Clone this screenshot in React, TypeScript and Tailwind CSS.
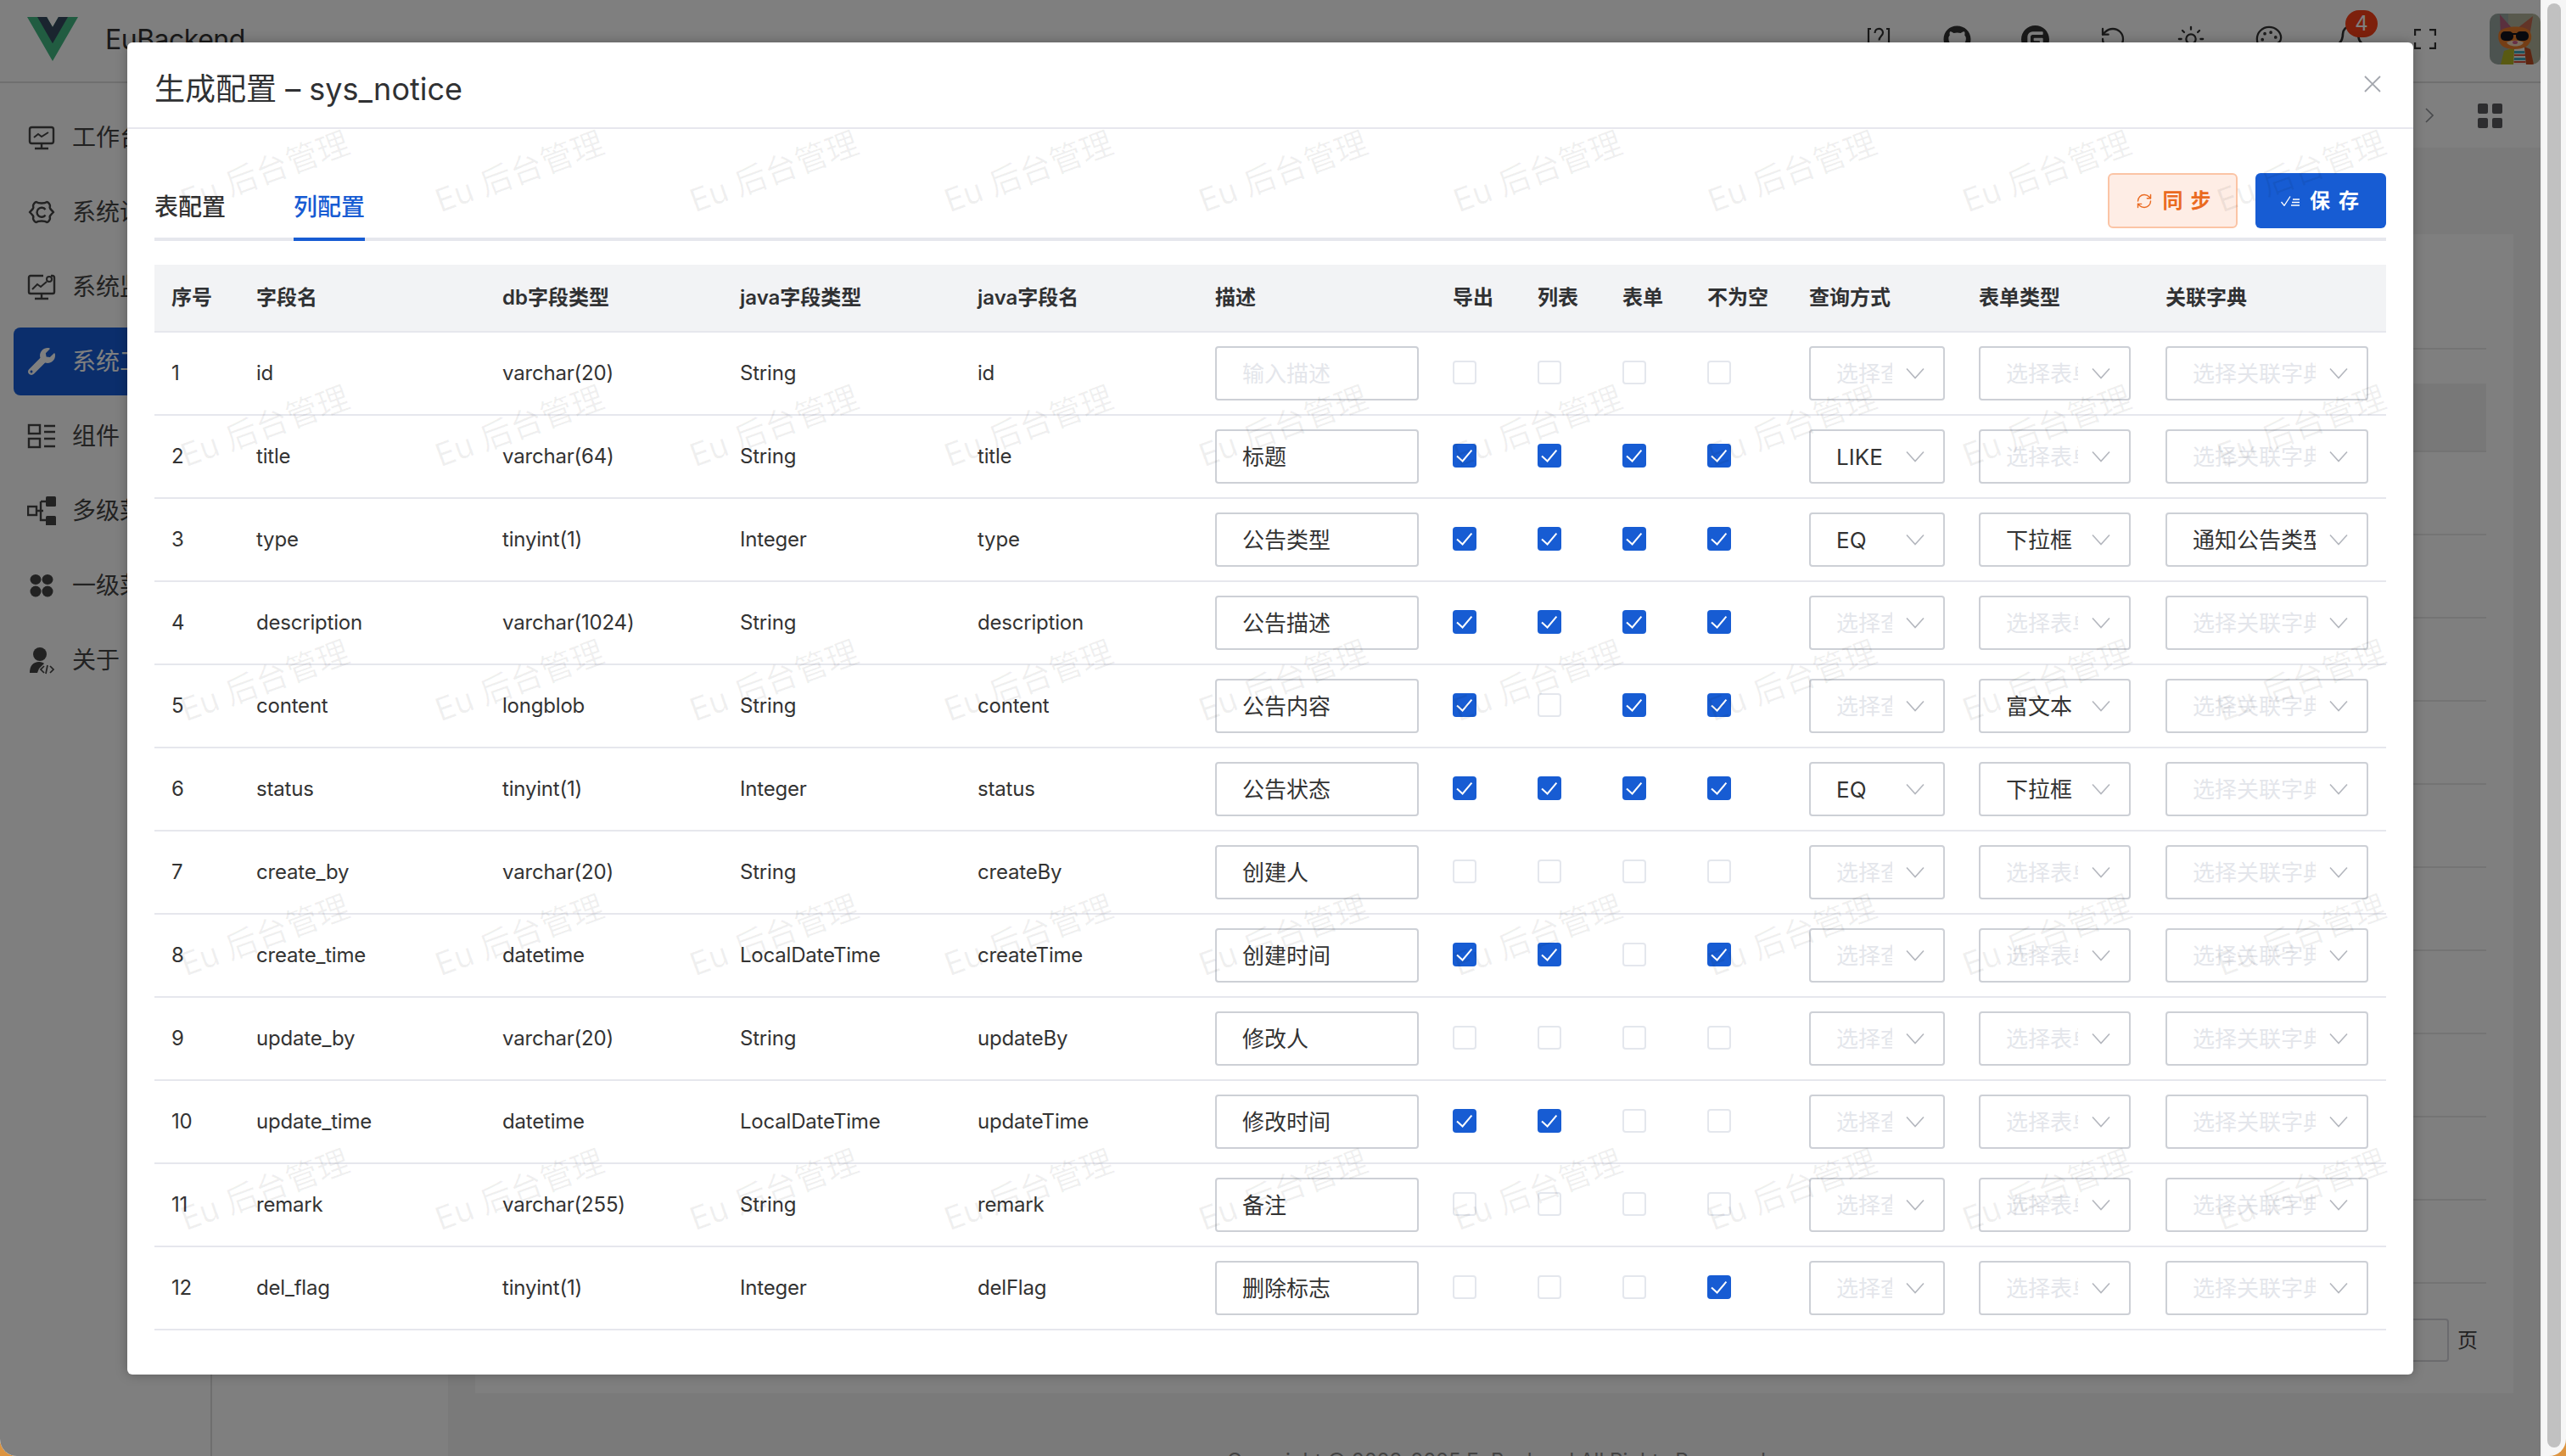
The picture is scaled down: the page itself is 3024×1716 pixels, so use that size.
import React from "react";
import { FaGithub, FaWrench } from "react-icons/fa";
import { SiGitee } from "react-icons/si";
import { RotateCcw, Sun, Palette, Bell, RefreshCw } from "lucide-react";

type Row = {
  n: number; name: string; db: string; jt: string; jn: string; desc: string;
  c: [number, number, number, number]; q?: string; f?: string; d?: string;
};

const rows: Row[] = [
  { n: 1, name: "id", db: "varchar(20)", jt: "String", jn: "id", desc: "", c: [0, 0, 0, 0] },
  { n: 2, name: "title", db: "varchar(64)", jt: "String", jn: "title", desc: "标题", c: [1, 1, 1, 1], q: "LIKE" },
  { n: 3, name: "type", db: "tinyint(1)", jt: "Integer", jn: "type", desc: "公告类型", c: [1, 1, 1, 1], q: "EQ", f: "下拉框", d: "通知公告类型" },
  { n: 4, name: "description", db: "varchar(1024)", jt: "String", jn: "description", desc: "公告描述", c: [1, 1, 1, 1] },
  { n: 5, name: "content", db: "longblob", jt: "String", jn: "content", desc: "公告内容", c: [1, 0, 1, 1], f: "富文本" },
  { n: 6, name: "status", db: "tinyint(1)", jt: "Integer", jn: "status", desc: "公告状态", c: [1, 1, 1, 1], q: "EQ", f: "下拉框" },
  { n: 7, name: "create_by", db: "varchar(20)", jt: "String", jn: "createBy", desc: "创建人", c: [0, 0, 0, 0] },
  { n: 8, name: "create_time", db: "datetime", jt: "LocalDateTime", jn: "createTime", desc: "创建时间", c: [1, 1, 0, 1] },
  { n: 9, name: "update_by", db: "varchar(20)", jt: "String", jn: "updateBy", desc: "修改人", c: [0, 0, 0, 0] },
  { n: 10, name: "update_time", db: "datetime", jt: "LocalDateTime", jn: "updateTime", desc: "修改时间", c: [1, 1, 0, 0] },
  { n: 11, name: "remark", db: "varchar(255)", jt: "String", jn: "remark", desc: "备注", c: [0, 0, 0, 0] },
  { n: 12, name: "del_flag", db: "tinyint(1)", jt: "Integer", jn: "delFlag", desc: "删除标志", c: [0, 0, 0, 1] },
];

const GRID =
  "grid grid-cols-[100px_290px_280px_280px_280px_280px_100px_100px_100px_120px_200px_220px_280px] items-center";

function Check({ on }: { on: boolean }) {
  return on ? (
    <div className="w-[28px] h-[28px] rounded-[4px] bg-[#175cd3]">
      <svg viewBox="0 0 28 28" className="w-[28px] h-[28px]" fill="none" stroke="#fff" strokeWidth="2">
        <path d="M5 14.5l6.6 6L22.4 7.6" />
      </svg>
    </div>
  ) : (
    <div className="w-[28px] h-[28px] rounded-[4px] border-2 border-[#e4e7ed] bg-white" />
  );
}

function Select({ value, placeholder, w }: { value?: string; placeholder: string; w: string }) {
  return (
    <div className={`${w} h-[64px] flex items-center border-2 border-[#cdd0d6] rounded-[4px] pl-[30px] pr-[22px] bg-white`}>
      <span className={`flex-1 min-w-0 overflow-hidden whitespace-nowrap text-[26px] tracking-normal ${value ? "text-[#333333]" : "text-[#e4e6eb]"}`}>
        {value ?? placeholder}
      </span>
      <svg viewBox="0 0 22 14" className="w-[22px] h-[14px] ml-[16px] shrink-0" fill="none" stroke="#b4b7be" strokeWidth="1.6">
        <path d="M1 1.5l10 11 10-11" />
      </svg>
    </div>
  );
}

function Avatar() {
  return (
    <svg viewBox="0 0 60 60" className="w-[60px] h-[60px] rounded-[10px] ml-[30px] shrink-0">
      <rect width="60" height="60" fill="#b0b29a" />
      <path d="M0 0h22v60H0z" fill="#7e9aa8" opacity=".45" />
      <path d="M12 1l15 17-14 9z" fill="#b5607c" />
      <path d="M51 3L33 17l14 10z" fill="#c4684f" />
      <path d="M28 60l1-20h12l2 20z" fill="#f3f1ea" />
      <path d="M29 44h12l.5 3H29zM29 52h13l.5 3H28.500z" fill="#3fa6bd" />
      <path d="M29 48h13v2H29zM28.500 56h14v2h-14z" fill="#d8503c" />
      <path d="M13 60l4-16 12-4-1 20z" fill="#b3b524" />
      <path d="M41 39l7 3 4 18H43z" fill="#bb4a22" />
      <path d="M11 22c5-8 32-9 37 0 3 7 0 13-5 17-7 4-21 4-27 0-5-4-7-10-5-17z" fill="#ea7d2a" />
      <path d="M20 34c5-3 15-3 20 0-2 6-17 6-20 0z" fill="#f4d9bb" />
      <rect x="13" y="21" width="15" height="11" rx="5" fill="#12121c" />
      <rect x="31" y="21" width="15" height="11" rx="5" fill="#12121c" />
      <rect x="26" y="23" width="7" height="2" fill="#12121c" />
      <ellipse cx="30" cy="34" rx="3" ry="2" fill="#d05f8a" />
    </svg>
  );
}

const sideIcon = "w-[34px] h-[34px] shrink-0";

const menu: { t: string; active?: boolean; icon: React.ReactNode }[] = [
  {
    t: "工作台",
    icon: (
      <svg viewBox="0 0 34 34" className={sideIcon} fill="none" stroke="currentColor" strokeWidth="2.4">
        <rect x="3" y="5" width="28" height="19" rx="2.5" />
        <path d="M17 24v5M9 30h16" />
        <path d="M8 17l5-4 4 3 8-5" strokeWidth="2" />
      </svg>
    ),
  },
  {
    t: "系统设置",
    icon: (
      <svg viewBox="0 0 34 34" className={sideIcon} fill="none" stroke="currentColor" strokeWidth="2.4" strokeLinejoin="round">
        <path d="M11 5c2 2 10 2 12 0 2 0 4 3 4 5-1 2 0 3 4 7-4 4-5 5-4 7 0 2-2 5-4 5-2-2-10-2-12 0-2 0-4-3-4-5 1-2 0-3-4-7 4-4 5-5 4-7 0-2 2-5 4-5z" />
        <path d="M21.5 14a5.5 5.5 0 1 0 0 6.5" />
      </svg>
    ),
  },
  {
    t: "系统监控",
    icon: (
      <svg viewBox="0 0 34 34" className={sideIcon} fill="none" stroke="currentColor" strokeWidth="2.4">
        <path d="M19 4H4a2 2 0 0 0-2 2v17a2 2 0 0 0 2 2h26a2 2 0 0 0 2-2V6a2 2 0 0 0-2-2h-2" />
        <path d="M17 25v5M9 31h16" />
        <path d="M6 20l6-6 4 3 7-6" strokeWidth="2" />
        <circle cx="26" cy="8" r="3" strokeWidth="2" />
      </svg>
    ),
  },
  { t: "系统工具", active: true, icon: <FaWrench className="w-[32px] h-[32px] mx-[1px] shrink-0" /> },
  {
    t: "组件",
    icon: (
      <svg viewBox="0 0 34 34" className={sideIcon} fill="none" stroke="currentColor" strokeWidth="2.4">
        <rect x="2" y="4" width="13" height="10" />
        <rect x="2" y="20" width="13" height="10" />
        <path d="M20 5h13M20 12h13M20 20h13M20 29h13" />
      </svg>
    ),
  },
  {
    t: "多级菜单",
    icon: (
      <svg viewBox="0 0 34 34" className={sideIcon}>
        <rect x="1" y="12" width="10" height="10" fill="none" stroke="currentColor" strokeWidth="2.4" />
        <path d="M11 17h8M16 6v22h6M16 6h6" fill="none" stroke="currentColor" strokeWidth="2.4" />
        <rect x="22" y="0" width="12" height="12" rx="1.5" fill="currentColor" />
        <rect x="22" y="23" width="12" height="12" rx="1.5" fill="currentColor" />
      </svg>
    ),
  },
  {
    t: "一级菜单",
    icon: (
      <svg viewBox="0 0 34 34" className={sideIcon} fill="currentColor">
        <ellipse cx="10" cy="10" rx="6.5" ry="6" />
        <ellipse cx="24" cy="10" rx="6.5" ry="6" />
        <ellipse cx="10" cy="24" rx="6.5" ry="6.5" />
        <ellipse cx="24" cy="24" rx="6.5" ry="6.5" />
      </svg>
    ),
  },
  {
    t: "关于",
    icon: (
      <svg viewBox="0 0 34 34" className={sideIcon}>
        <circle cx="15" cy="10" r="8" fill="currentColor" />
        <path d="M3 32c0-8 4-13 11-13 3 0 5 1 6 2l-6 6-2 5z" fill="currentColor" />
        <path d="M20 24l-4 4 4 4M24 23l-2 10M27 24l4 4-4 4" fill="none" stroke="currentColor" strokeWidth="1.7" />
      </svg>
    ),
  },
];

function Background() {
  return (
    <div className="w-[2994px] h-full flex flex-col bg-[#f4f4f4]">
      <header className="h-[98px] shrink-0 bg-white border-b-2 border-[#dedede] flex items-center pl-[32px] pb-[4px] text-[#333333]">
        <svg viewBox="0 0 261.76 226.69" className="w-[60px] h-[52px] shrink-0">
          <path d="M161.096.001l-30.225 52.351L100.647.001H-.005l130.877 226.688L261.749.001z" fill="#42b883" />
          <path d="M161.096.001l-30.225 52.351L100.647.001H52.346l78.526 136.01L209.398.001z" fill="#35495e" />
        </svg>
        <span className="ml-[32px] mt-[2px] text-[32px] tracking-[-0.5px] text-[#333333]">EuBackend</span>
        <div className="flex-1" />
        <div className="w-[92px] flex justify-center">
          <svg viewBox="0 0 28 34" className="w-[28px] h-[34px]" fill="none" stroke="currentColor" strokeWidth="2.2">
            <path d="M5 5H2v24h3M23 5h3v24h-3" />
            <path d="M9.5 10c0-7 9.5-6.5 9.5-.5 0 4-4.5 4-4.500 9" />
            <path d="M14.500 23v3" />
          </svg>
        </div>
        <div className="w-[92px] flex justify-center"><FaGithub className="w-[33px] h-[33px]" /></div>
        <div className="w-[92px] flex justify-center"><SiGitee className="w-[33px] h-[33px]" /></div>
        <div className="w-[92px] flex justify-center"><RotateCcw className="w-[32px] h-[32px]" strokeWidth={1.7} /></div>
        <div className="w-[92px] flex justify-center"><Sun className="w-[34px] h-[34px]" strokeWidth={1.6} /></div>
        <div className="w-[92px] flex justify-center"><Palette className="w-[34px] h-[34px]" strokeWidth={1.6} /></div>
        <div className="w-[92px] flex justify-center relative pl-[8px]">
          <Bell className="w-[36px] h-[36px]" strokeWidth={1.8} />
          <span className="absolute left-[44px] -top-[16px] w-[38px] h-[32px] rounded-full bg-[#fb4118] text-white text-[24px] leading-[32px] text-center">4</span>
        </div>
        <div className="w-[92px] flex justify-center">
          <svg viewBox="0 0 26 24" className="w-[26px] h-[24px]" fill="none" stroke="currentColor" strokeWidth="2.4">
            <path d="M1 8V1h7M18 1h7v7M25 16v7h-7M8 23H1v-7" />
          </svg>
        </div>
        <Avatar />
      </header>
      <div className="flex flex-1 min-h-0">
        <aside className="w-[250px] shrink-0 bg-white border-r-2 border-[#dcdcdc] pt-[20px] text-[#444444]">
          {menu.map((m) => (
            <div key={m.t} className="h-[88px] py-[4px] pl-[16px] overflow-hidden">
              <div className={`h-[80px] flex items-center gap-[19px] pl-[16px] rounded-[8px] whitespace-nowrap text-[28px] ${m.active ? "bg-[#165dd8] text-white" : ""}`}>
                {m.icon}
                <span>{m.t}</span>
              </div>
            </div>
          ))}
        </aside>
        <main className="flex-1 min-w-0 flex flex-col">
          <div className="h-[76px] shrink-0 bg-white flex items-center pl-[2608px]">
            <svg viewBox="0 0 10 18" className="w-[10px] h-[18px]" fill="none" stroke="#909399" strokeWidth="1.6">
              <path d="M1 1l8 8-8 8" />
            </svg>
            <div className="grid grid-cols-[12px_12px] gap-[5px] ml-[52px]">
              <span className="w-[12px] h-[12px] bg-[#5a5a5e] rounded-[2px]" />
              <span className="w-[12px] h-[12px] bg-[#5a5a5e] rounded-[2px]" />
              <span className="w-[12px] h-[12px] bg-[#5a5a5e] rounded-[2px]" />
              <span className="w-[12px] h-[12px] bg-[#5a5a5e] rounded-[2px]" />
            </div>
          </div>
          <div className="flex flex-1 min-h-0">
            <div className="w-[278px] shrink-0 bg-white" />
            <div className="flex-1 min-w-0 pl-[32px] pr-[32px] pt-[102px]">
              <div className="h-[1366px] bg-white px-[32px] flex flex-col">
                <div className="h-[136px] shrink-0 border-b-2 border-[#e8e8e8]" />
                <div className="h-[81px] shrink-0 mt-[40px] bg-[#f0f0f0] border-b-2 border-[#e8e8e8]" />
                {Array.from({ length: 10 }).map((_, i) => (
                  <div key={i} className="h-[98px] shrink-0 border-b-2 border-[#e8e8e8]" />
                ))}
                <div className="flex justify-end items-center gap-[10px] mt-[41px] text-[24px] text-[#444444]">
                  <div className="w-[100px] h-[51px] border-2 border-[#d6d6dc] rounded-[4px]" />
                  <span className="mr-[10px]">页</span>
                </div>
              </div>
              <div className="pl-[886px] pt-[62px] text-[24px] whitespace-nowrap text-[#888888]">
                Copyright © 2023-2025 EuBackend All Rights Reserved.
              </div>
            </div>
          </div>
        </main>
      </div>
    </div>
  );
}

function Scrollbar() {
  return (
    <div className="w-[30px] h-full shrink-0 bg-[#f6f6f6] border-l-2 border-[#f0f0f0] pl-[6px] pr-[6px] pt-[4px] pb-[10px]">
      <div className="w-[16px] h-full rounded-[8px] bg-[#c1c1c1]" />
    </div>
  );
}

function Modal() {
  return (
    <div className="absolute left-[150px] top-[50px] w-[2694px] h-[1570px] bg-white rounded-[6px] shadow-[0_0_14px_rgba(0,0,0,0.28)] overflow-hidden">
      <div className="h-[102px] border-b-2 border-[#e7e7ee] flex items-center justify-between pl-[32px] pr-[38px] pt-[10px]">
        <h2 className="text-[36px] font-normal text-[#303133]">生成配置 – sys_notice</h2>
        <svg viewBox="0 0 20 20" className="w-[20px] h-[20px] mb-[12px]" fill="none" stroke="#a3a6ad" strokeWidth="1.8">
          <path d="M1 1l18 18M19 1L1 19" />
        </svg>
      </div>
      <div className="px-[32px]">
        <div className="h-[132px] border-b-4 border-[#e6e7ed] flex items-end">
          <div className="h-[76px] -mb-[4px] flex items-center border-b-4 border-transparent text-[28px] font-medium text-[#333333] mr-[80px]">表配置</div>
          <div className="h-[76px] -mb-[4px] flex items-center border-b-4 border-[#175cd3] text-[28px] font-medium text-[#175cd3]">列配置</div>
          <div className="flex-1" />
          <div className="flex gap-[21px] mb-[11px]">
            <button className="w-[153px] h-[65px] flex items-center justify-center gap-[12px] rounded-[6px] border-2 border-[#fbc4a5] bg-[#feede5] text-[#ea6a20] text-[24px] font-semibold tracking-[9px] pl-[10px]">
              <RefreshCw className="w-[20px] h-[20px]" strokeWidth={1.7} />
              <span>同步</span>
            </button>
            <button className="w-[154px] h-[65px] flex items-center justify-center gap-[12px] rounded-[6px] bg-[#175cd3] text-white text-[24px] font-semibold tracking-[10px] pl-[8px]">
              <svg viewBox="0 0 22 12" className="w-[22px] h-[12px]" fill="none" stroke="#fff" strokeWidth="1.3">
                <path d="M0.5 7l3.500 4.300L11 0.500M14 4h8M13 7.500h9M12 11h10" />
              </svg>
              <span>保存</span>
            </button>
          </div>
        </div>
        <div className={`${GRID} mt-[28px] h-[80px] bg-[#f2f3f5] border-b-2 border-[#e6e7ed] text-[24px] font-semibold text-[#303133]`}>
          {["序号", "字段名", "db字段类型", "java字段类型", "java字段名", "描述", "导出", "列表", "表单", "不为空", "查询方式", "表单类型", "关联字典"].map((h) => (
            <div key={h} className="px-[20px] whitespace-nowrap">{h}</div>
          ))}
        </div>
        {rows.map((r) => (
          <div key={r.n} className={`${GRID} h-[98px] border-b-2 border-[#e6e7ed] text-[24px] text-[#333333] tracking-[-0.2px]`}>
            <div className="px-[20px]">{r.n}</div>
            <div className="px-[20px]">{r.name}</div>
            <div className="px-[20px]">{r.db}</div>
            <div className="px-[20px]">{r.jt}</div>
            <div className="px-[20px]">{r.jn}</div>
            <div className="px-[20px]">
              <div className="w-[240px] h-[64px] flex items-center border-2 border-[#cdd0d6] rounded-[4px] pl-[30px] text-[26px] tracking-normal">
                {r.desc ? <span>{r.desc}</span> : <span className="text-[#e4e6eb]">输入描述</span>}
              </div>
            </div>
            {r.c.map((v, i) => (
              <div key={i} className="px-[20px] -mt-[2px]">
                <Check on={v === 1} />
              </div>
            ))}
            <div className="px-[20px]"><Select w="w-[160px]" value={r.q} placeholder="选择查询方式" /></div>
            <div className="px-[20px]"><Select w="w-[179px]" value={r.f} placeholder="选择表单类型" /></div>
            <div className="px-[20px]"><Select w="w-[239px]" value={r.d} placeholder="选择关联字典" /></div>
          </div>
        ))}
      </div>
      <div className="absolute inset-0 overflow-hidden pointer-events-none">
        <div className="absolute left-[12px] top-[2px] grid grid-cols-[repeat(9,300px)] auto-rows-[300px]">
          {Array.from({ length: 54 }).map((_, i) => (
            <div key={i} className="flex items-center justify-center">
              <span className="-rotate-[20deg] whitespace-nowrap text-[38px] text-[rgba(0,0,0,0.06)]">Eu 后台管理</span>
            </div>
          ))}
        </div>
      </div>
    </div>
  );
}

export default function App() {
  return (
    <div className="w-[3024px] h-[1716px] overflow-hidden bg-[#dc9440] [font-family:Inter,'Noto_Sans_CJK_SC',sans-serif]">
      <div className="relative flex w-full h-full rounded-b-[20px] overflow-hidden">
        <Background />
        <Scrollbar />
        <div className="absolute left-0 top-0 w-[2994px] h-full bg-black/50" />
        <Modal />
      </div>
    </div>
  );
}
